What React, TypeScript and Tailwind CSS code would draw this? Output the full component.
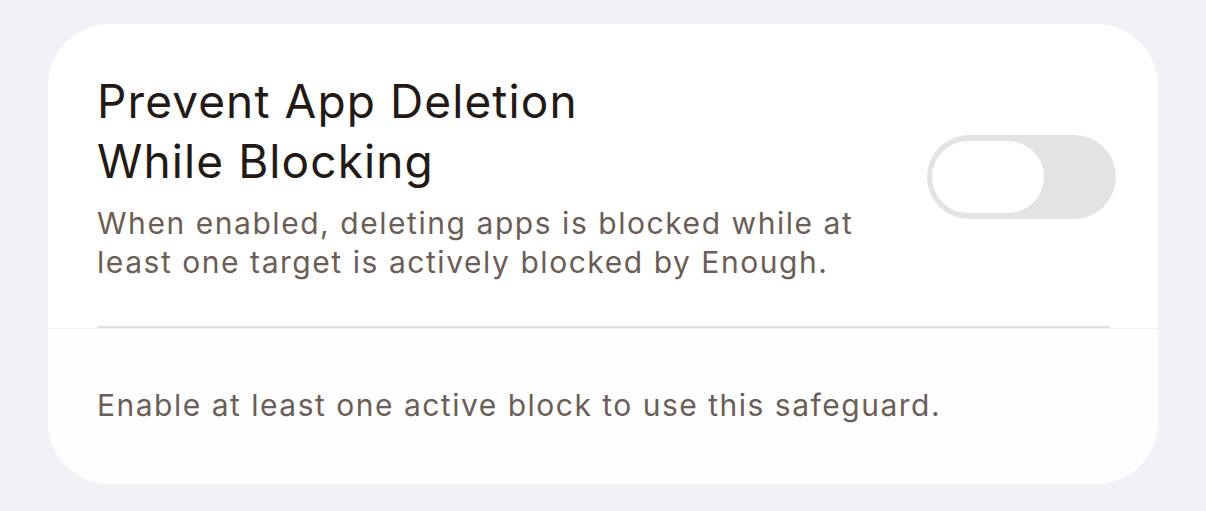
import React from "react";

export default function App() {
  return (
    <div className="min-h-[511px] w-full bg-[#f2f1f7] px-[48px] pt-[24px] pb-[27px]" style={{ fontFamily: "Inter, 'Noto Sans', sans-serif" }}>
      <div className="w-[1110px] overflow-hidden rounded-[62px] bg-white">
        <div className="flex items-center justify-between pt-[47px] pb-[44px] pl-[49px] pr-[42px]">
          <div className="flex flex-col gap-[13px]">
            <h1 className="w-[600px] text-[46px] leading-[60px] font-normal tracking-[1.1px] text-[#231a16]">
              Prevent App Deletion While Blocking
            </h1>
            <p className="w-[800px] text-[30px] leading-[39px] tracking-[1.55px] text-[#6b5e56]">
              When enabled, deleting apps is blocked while at least one target is actively blocked by Enough.
            </p>
          </div>
          <div className="flex h-[84px] w-[189px] shrink-0 items-center rounded-full bg-[#e3e3e5] pl-[5px]">
            <div className="h-[72px] w-[112px] rounded-full bg-white" />
          </div>
        </div>
        <div className="border-b border-[#f1f1f5]">
          <div className="ml-[49px] mr-[48px] h-[2px] bg-[#e1e1e3]" />
        </div>
        <div className="bg-[#fefeff] pt-[57px] pb-[59px] pl-[49px]">
          <p className="text-[30px] leading-[39px] tracking-[1.5px] text-[#6b5e56]">
            Enable at least one active block to use this safeguard.
          </p>
        </div>
      </div>
    </div>
  );
}
